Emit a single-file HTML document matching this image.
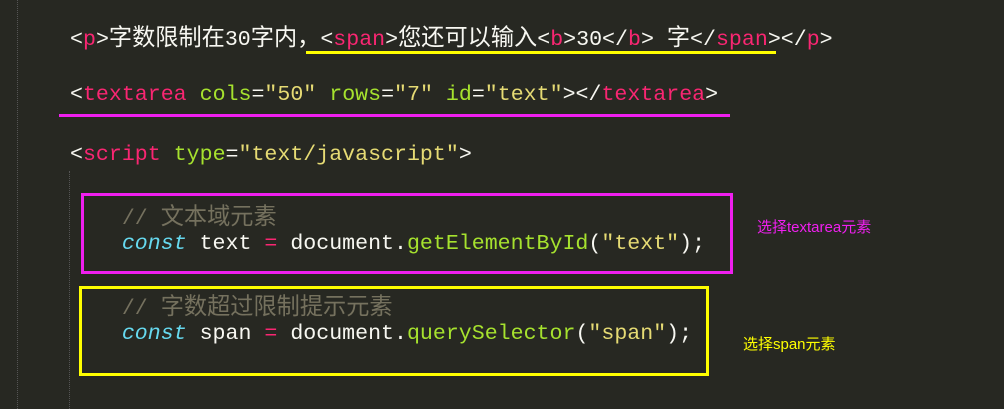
<!DOCTYPE html>
<html><head><meta charset="utf-8"><style>
body{margin:0;width:1004px;height:409px;background:#272822;position:relative;overflow:hidden;font-family:"Liberation Mono","Noto Sans CJK SC",monospace;font-size:21.6px;color:#f8f8f2}
.l{position:absolute;left:70px;white-space:pre;line-height:30px}
.t{color:#f92672}.a{color:#a6e22e}.s{color:#e6db74}.c{color:#75715e}.k{color:#66d9ef;font-style:italic}.f{color:#a6e22e}
.z{font-family:"Noto Sans CJK SC",sans-serif;font-size:23.2px}
.box{position:absolute;box-sizing:border-box;border:3px solid}
.lab{position:absolute;font-family:"Liberation Sans","Noto Sans CJK SC",sans-serif;font-size:15px}
</style></head><body>
<div style="position:absolute;left:17px;top:0;height:409px;border-left:1px dotted #555"></div>
<div style="position:absolute;left:69px;top:171px;height:238px;border-left:1px dotted #555"></div>
<div class="l" style="top:20px">&lt;<span class="t">p</span>&gt;<span class="z">字数限制在</span>30<span class="z">字内，</span>&lt;<span class="t">span</span>&gt;<span class="z">您还可以输入</span>&lt;<span class="t">b</span>&gt;30&lt;/<span class="t">b</span>&gt; <span class="z">字</span>&lt;/<span class="t">span</span>&gt;&lt;/<span class="t">p</span>&gt;</div>
<div style="position:absolute;left:306px;top:51px;width:470px;height:3px;background:#ffff00"></div>
<div class="l" style="top:80px">&lt;<span class="t">textarea</span> <span class="a">cols</span>=<span class="s">"50"</span> <span class="a">rows</span>=<span class="s">"7"</span> <span class="a">id</span>=<span class="s">"text"</span>&gt;&lt;/<span class="t">textarea</span>&gt;</div>
<div style="position:absolute;left:59px;top:114px;width:671px;height:3px;background:#f01ff0"></div>
<div class="l" style="top:140px">&lt;<span class="t">script</span> <span class="a">type</span>=<span class="s">"text/javascript"</span>&gt;</div>
<div class="l" style="top:199px"><span class="c">    // <span class="z">文本域元素</span></span></div>
<div class="l" style="top:229px">    <span class="k">const</span> text <span class="t">=</span> document.<span class="f">getElementById</span>(<span class="s">"text"</span>);</div>
<div class="l" style="top:289px"><span class="c">    // <span class="z">字数超过限制提示元素</span></span></div>
<div class="l" style="top:319px">    <span class="k">const</span> span <span class="t">=</span> document.<span class="f">querySelector</span>(<span class="s">"span"</span>);</div>
<div class="box" style="left:81px;top:193px;width:652px;height:81px;border-color:#f01ff0"></div>
<div class="box" style="left:79px;top:286px;width:630px;height:90px;border-color:#ffff00"></div>
<div class="lab" style="left:757px;top:216px;color:#f01ff0">选择textarea元素</div>
<div class="lab" style="left:743px;top:333px;color:#ffff00">选择span元素</div>
</body></html>
